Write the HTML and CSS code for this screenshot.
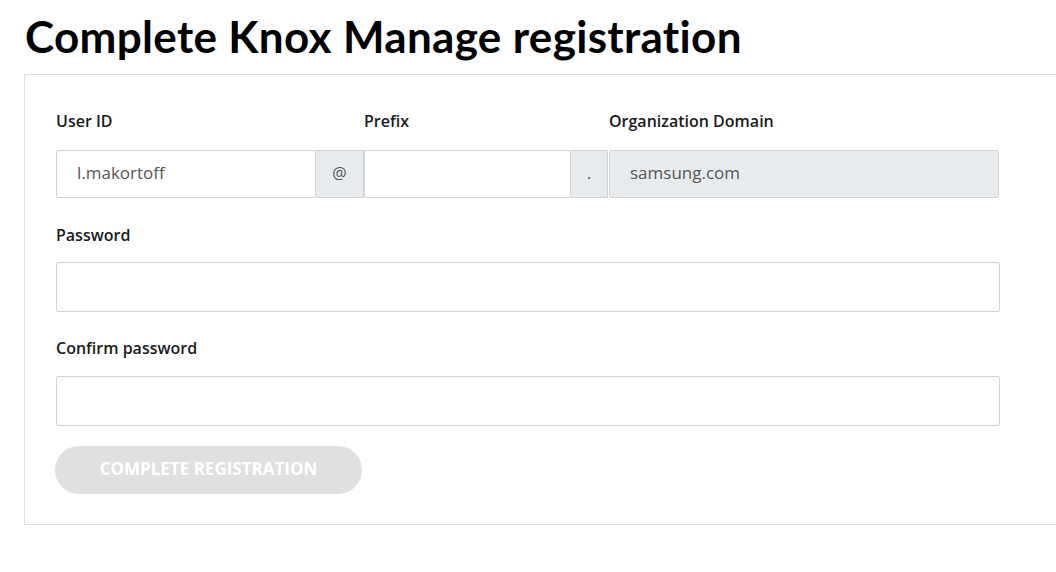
FILE: index.html
```html
<!DOCTYPE html>
<html>
<head>
<meta charset="utf-8">
<link rel="stylesheet" href="styles.css">
</head>
<body>
<div class="page">
  <h1 class="title">Complete Knox Manage registration</h1>
  <div class="card">
    <div class="row">
      <div class="group g-user">
        <label class="label">User ID</label>
        <div class="combo">
          <div class="input in-user">l.makortoff</div>
          <div class="addon addon-at">@</div>
        </div>
      </div>
      <div class="group g-prefix">
        <label class="label">Prefix</label>
        <div class="combo">
          <div class="input in-prefix"></div>
          <div class="addon addon-dot">.</div>
        </div>
      </div>
      <div class="group g-domain">
        <label class="label">Organization Domain</label>
        <div class="combo">
          <div class="input in-domain disabled">samsung.com</div>
        </div>
      </div>
    </div>
    <div class="field field-pw">
      <label class="label">Password</label>
      <div class="input wide"></div>
    </div>
    <div class="field field-confirm">
      <label class="label">Confirm password</label>
      <div class="input wide"></div>
    </div>
    <button class="btn">COMPLETE REGISTRATION</button>
  </div>
</div>
</body>
</html>
```
FILE: styles.css
```css
html, body { margin: 0; padding: 0; background: #fff; }
body { font-family: "Open Sans", "Noto Sans", sans-serif; color: #1c1c1c; }
.page { padding: 12px 0 0 24px; }
.title {
  font-family: "Lato", sans-serif;
  font-weight: 700;
  font-size: 44px;
  line-height: 48px;
  margin: 0 0 14px 1px;
  color: #000;
  letter-spacing: 0.33px;
}
.card {
  border: 1px solid #dfdfe2;
  border-right: none;
  padding: 35px 0 0 31px;
  box-sizing: border-box;
  width: 1032px;
  height: 451px;
}
.row { display: flex; }
.group { display: flex; flex-direction: column; }
.g-user { width: 308px; }
.g-prefix { width: 245px; }
.g-domain { width: 390px; }
.label {
  font-size: 16px;
  font-weight: 600;
  line-height: 22px;
  height: 22px;
  margin-bottom: 18px;
  color: #1a1a1a;
}
.combo { display: flex; height: 48px; }
.input {
  box-sizing: border-box;
  border: 1px solid #d2d2d2;
  border-radius: 2px;
  background: #fff;
  font-size: 17px;
  color: #555;
  padding: 0 20px 3px;
  display: flex;
  align-items: center;
  height: 48px;
}
.in-user { width: 260px; }
.in-prefix { width: 208px; }
.in-domain { width: 390px; }
.disabled { background: #e8ebee; }
.addon {
  box-sizing: border-box;
  background: #e8ebee;
  border: 1px solid #d2d2d2;
  border-left: none;
  display: flex;
  align-items: center;
  justify-content: center;
  font-size: 16px;
  color: #555;
  height: 48px;
  padding-bottom: 2px;
}
.addon-at { width: 48px; }
.addon-dot { width: 37px; border-right: 1px solid #d2d2d2; margin-right: 1px; }
.field { display: flex; flex-direction: column; }
.field-pw { margin-top: 26px; }
.field-confirm { margin-top: 25px; }
.field-confirm .label { margin-bottom: 17px; }
.field-pw .label { margin-bottom: 16px; }
.wide { width: 944px; height: 50px; }
.btn {
  display: block;
  margin-top: 20px;
  width: 307px;
  height: 48px;
  border: none;
  border-radius: 24px;
  background: #e0e0e0;
  color: #fff;
  font-family: "Open Sans", sans-serif;
  font-weight: 700;
  font-size: 17px;
  padding: 0 0 3px;
  margin-left: -1px;
}
```
